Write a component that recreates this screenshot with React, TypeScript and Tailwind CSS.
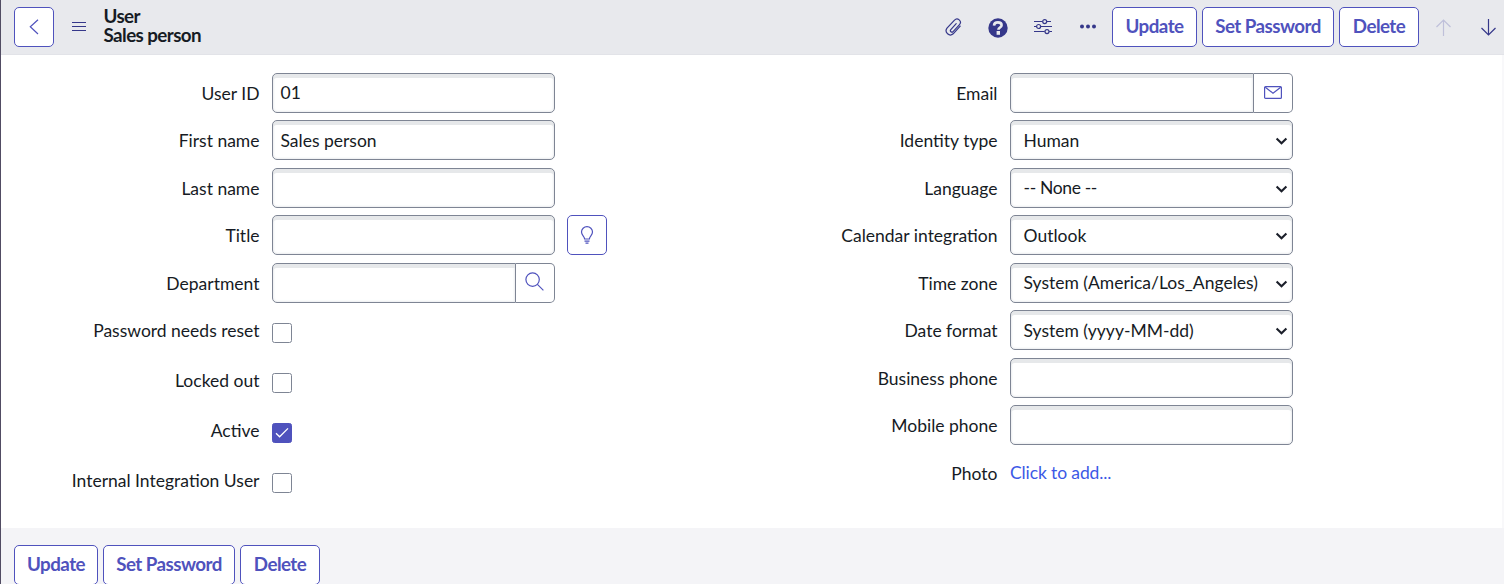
import { ReactNode } from "react";

function Button({ children, className }: { children: ReactNode; className: string }) {
  return (
    <button
      className={`flex h-10 shrink-0 items-center justify-center rounded-[5px] border border-[#4f52bd] bg-white pb-0.5 text-[18.75px] font-bold tracking-[-0.55px] whitespace-nowrap text-[#4f52bd] ${className}`}
    >
      {children}
    </button>
  );
}

function Row({ label, children, tall = false }: { label: string; children: ReactNode; tall?: boolean }) {
  return (
    <div className={`flex items-start ${tall ? "h-[50px]" : "h-[47.5px]"}`}>
      <label className="flex h-[42px] w-[260px] shrink-0 items-center justify-end pr-[12.5px] whitespace-nowrap">
        {label}
      </label>
      <div className="flex">{children}</div>
    </div>
  );
}

const field =
  "flex h-10 items-center border border-[#7e8594] bg-white shadow-[inset_0_4px_0_#e6e8ea,inset_0_0_2px_1px_#eceef0]";

function Input({ value = "" }: { value?: string }) {
  return <div className={`${field} w-[283px] rounded-[5px] pt-px pl-[7.5px]`}>{value}</div>;
}

function AddonInput({ children }: { children: ReactNode }) {
  return (
    <div className="flex w-[283px]">
      <div className={`${field} w-[244px] rounded-l-[5px]`} />
      <button className="flex h-10 w-[39px] items-center justify-center rounded-r-[5px] border border-l-0 border-[#7e8594] bg-white pr-px text-[#4f52bd]">
        {children}
      </button>
    </div>
  );
}

function Select({ value, className = "" }: { value: string; className?: string }) {
  return (
    <div className={`${field} w-[283px] justify-between rounded-[5px] pt-px pr-[4px] pl-[12.5px]`}>
      <span className={className}>{value}</span>
      <svg width="13" height="8" viewBox="0 0 13 8" fill="none" className="mt-px">
        <path d="M1.6 1.4 6.5 6.2l4.9-4.8" stroke="#1b1f2a" strokeWidth="2.1" />
      </svg>
    </div>
  );
}

function Checkbox({ checked = false }: { checked?: boolean }) {
  return (
    <span
      className={`mt-[13px] flex size-5 items-center justify-center rounded-[2.5px] border ${checked ? "border-[#4f52bd] bg-[#4f52bd]" : "border-[#7e8594] bg-white"}`}
    >
      {checked && (
        <svg width="14" height="12" viewBox="0 0 14 12" fill="none" stroke="#fff" strokeWidth="1.3">
          <path d="m1 6.3 3.6 3.5L13 1.4" />
        </svg>
      )}
    </span>
  );
}

function Header() {
  return (
    <header className="flex h-[55px] shrink-0 items-start border-b border-[#e2e3e8] bg-[#e8e9ed] pt-[7px] pl-[13px] text-[#35378a]">
      <button className="flex size-10 items-center justify-center rounded-[5px] border border-[#4f52bd] bg-white pr-px text-[#4f52bd]">
        <svg width="10" height="16" viewBox="0 0 10 16" fill="none" stroke="currentColor" strokeWidth="1.2">
          <path d="M9 .7 1.3 7.8 9 15" />
        </svg>
      </button>
      <svg width="14" height="10" viewBox="0 0 14 10" stroke="currentColor" className="mt-[15px] ml-[18px]">
        <path d="M0 .5h14M0 4.5h14M0 8.5h14" />
      </svg>
      <h1 className="-mt-px ml-[17.5px] text-[18.75px] leading-[19px] font-bold tracking-[-0.57px] text-[#161b24]">
        User
        <br />
        Sales person
      </h1>
      <div className="ml-auto flex h-10 items-center">
        <svg width="17" height="18" viewBox="0 0 17 18" fill="none" stroke="currentColor" strokeWidth="1.2" strokeLinecap="round">
          <path d="m11.2 5.6-5.4 6a1.5 1.5 0 0 0 2.3 2l6.4-7a3.3 3.3 0 0 0-5-4.4L2 10.2a4.2 4.2 0 0 0 6.2 5.6l7-7.7" />
        </svg>
        <svg width="20" height="20" viewBox="0 0 20 20" className="mt-px ml-[26px]">
          <circle cx="10" cy="10" r="9.7" fill="currentColor" />
          <path d="M6 7.6C6.1 5.5 7.7 4.4 9.9 4.4c2.2 0 3.7 1.1 3.7 2.8 0 2.3-3.2 2.3-3.2 4.5" fill="none" stroke="#e8e9ed" strokeWidth="2.6" />
          <path d="M8.6 13h3.4v3.8H8.6z" fill="#e8e9ed" />
        </svg>
        <svg width="18" height="16" viewBox="0 0 18 16" fill="none" stroke="currentColor" strokeWidth="1.2" className="ml-[26px]">
          <path d="M0 2.5h8.5M13 2.5h4M0 7.5h2.5M7 7.5h11M0 12.5h10.7M15.2 12.5H18" />
          <circle cx="10.7" cy="2.6" r="2" />
          <circle cx="4.6" cy="7.5" r="2" />
          <circle cx="13" cy="12.6" r="2" />
        </svg>
        <svg width="16" height="5" viewBox="0 0 16 5" fill="currentColor" className="mb-px ml-[28px]">
          <circle cx="2" cy="2.5" r="2" />
          <circle cx="8" cy="2.5" r="2" />
          <circle cx="14" cy="2.5" r="2" />
        </svg>
        <div className="ml-[16.5px] flex gap-[5px]">
          <Button className="w-[85px]">Update</Button>
          <Button className="w-[132px]">Set Password</Button>
          <Button className="w-20">Delete</Button>
        </div>
        <svg width="16" height="17" viewBox="0 0 16 17" fill="none" stroke="#bfc0da" strokeWidth="1.2" className="ml-[17px]">
          <path d="M7.5 17V1M.5 8l7-7 7 7" />
        </svg>
        <svg width="16" height="17" viewBox="0 0 16 17" fill="none" stroke="currentColor" strokeWidth="1.2" className="mr-[7px] ml-[29px]">
          <path d="M7.5 0v16M.5 9l7 7 7-7" />
        </svg>
      </div>
    </header>
  );
}

export default function App() {
  return (
    <div className="flex h-[584px] w-[1504px] flex-col overflow-hidden border-l border-[#514c63] bg-white font-[Lato,sans-serif] text-[17.5px] text-[#161b24]">
      <Header />
      <main className="flex h-[473px] shrink-0 border-r-2 border-[#f8f8fa] pt-[17.9px] pl-[11px]">
        <section className="w-[738px]">
          <Row label="User ID"><Input value="01" /></Row>
          <Row label="First name"><Input value="Sales person" /></Row>
          <Row label="Last name"><Input /></Row>
          <Row label="Title">
            <Input />
            <button className="ml-3 flex size-10 items-center justify-center rounded-[5px] border border-[#4f52bd] bg-white text-[#4f52bd]">
              <svg width="14" height="18" viewBox="0 0 14 18" fill="none" stroke="currentColor" strokeWidth="1.2" className="-mt-px">
                <path d="M4.6 13c0-2.8-3.1-3.7-3.1-6.9a5.5 5.5 0 0 1 11 0c0 3.2-3.1 4.1-3.1 6.9zM4.5 15.1h5M5.5 17.1h3" />
              </svg>
            </button>
          </Row>
          <Row label="Department">
            <AddonInput>
              <svg width="19" height="19" viewBox="0 0 19 19" fill="none" stroke="currentColor" strokeWidth="1.2" className="-mt-0.5">
                <circle cx="7.6" cy="7.6" r="6.7" />
                <path d="m12.4 12.4 6 6" />
              </svg>
            </AddonInput>
          </Row>
          <Row tall label="Password needs reset"><Checkbox /></Row>
          <Row tall label="Locked out"><Checkbox /></Row>
          <Row tall label="Active"><Checkbox checked /></Row>
          <Row tall label="Internal Integration User"><Checkbox /></Row>
        </section>
        <section>
          <Row label="Email">
            <AddonInput>
              <svg width="18" height="13" viewBox="0 0 18 13" fill="none" stroke="currentColor" strokeWidth="1.2">
                <rect x=".6" y=".6" width="16.8" height="11.8" rx="1" />
                <path d="m1.3 1.2 7.7 6 7.7-6" />
              </svg>
            </AddonInput>
          </Row>
          <Row label="Identity type"><Select value="Human" /></Row>
          <Row label="Language"><Select value="-- None --" className="tracking-[-0.35px]" /></Row>
          <Row label="Calendar integration"><Select value="Outlook" /></Row>
          <Row label="Time zone"><Select value="System (America/Los_Angeles)" /></Row>
          <Row label="Date format"><Select value="System (yyyy-MM-dd)" /></Row>
          <Row label="Business phone"><Input /></Row>
          <Row label="Mobile phone"><Input /></Row>
          <Row label="Photo">
            <a className="flex h-10 items-center tracking-[-0.12px] text-[#3c59e6]">Click to add...</a>
          </Row>
        </section>
      </main>
      <footer className="flex h-14 shrink-0 gap-[5px] bg-[#f4f4f7] pt-[17px] pl-[13px]">
        <Button className="w-[84px]">Update</Button>
        <Button className="w-[132px]">Set Password</Button>
        <Button className="w-20">Delete</Button>
      </footer>
    </div>
  );
}
